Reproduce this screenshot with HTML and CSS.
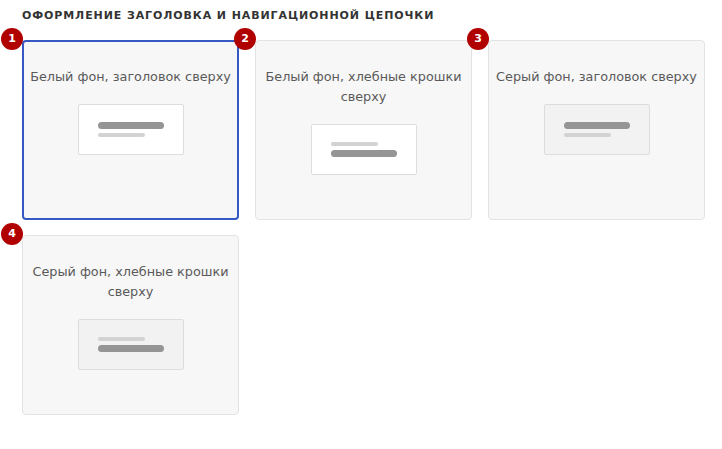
FILE: index.html
```html
<!DOCTYPE html>
<html lang="ru">
<head>
    <meta charset="UTF-8">
    <meta name="viewport" content="width=device-width, initial-scale=1.0">
    <title>Оформление заголовка</title>
    <link rel="stylesheet" href="styles.css">
</head>
<body>
    <div class="page">
        <h2 class="section-title">Оформление заголовка и навигационной цепочки</h2>
        <div class="variants">
            <div class="variant selected">
                <span class="badge">1</span>
                <p class="variant-name">Белый фон, заголовок сверху</p>
                <div class="preview">
                    <span class="bar bar-dark"></span>
                    <span class="bar bar-light"></span>
                </div>
            </div>
            <div class="variant">
                <span class="badge">2</span>
                <p class="variant-name">Белый фон, хлебные крошки сверху</p>
                <div class="preview">
                    <span class="bar bar-light"></span>
                    <span class="bar bar-dark"></span>
                </div>
            </div>
            <div class="variant">
                <span class="badge">3</span>
                <p class="variant-name">Серый фон, заголовок сверху</p>
                <div class="preview grey">
                    <span class="bar bar-dark"></span>
                    <span class="bar bar-light"></span>
                </div>
            </div>
            <div class="variant">
                <span class="badge">4</span>
                <p class="variant-name">Серый фон, хлебные крошки сверху</p>
                <div class="preview grey">
                    <span class="bar bar-light"></span>
                    <span class="bar bar-dark"></span>
                </div>
            </div>
        </div>
    </div>
</body>
</html>
```

FILE: styles.css
```css
body {
    margin: 0;
    background-color: #fff;
    font-family: 'DejaVu Sans', sans-serif;
    color: #555;
}

.page {
    width: 683px;
    padding: 9px 0 0 22px;
}

.section-title {
    margin: 0 0 18px 0;
    font-size: 11px;
    line-height: 13px;
    font-weight: 700;
    letter-spacing: 0.9px;
    text-transform: uppercase;
    color: #333;
}

.variants {
    display: grid;
    grid-template-columns: repeat(3, 217px);
    grid-auto-rows: 180px;
    column-gap: 16px;
    row-gap: 15px;
}

.variant {
    position: relative;
    box-sizing: border-box;
    padding: 26px 4px 0 4px;
    background-color: #f7f7f7;
    border: 1px solid #e3e3e3;
    border-radius: 4px;
    display: flex;
    flex-direction: column;
    align-items: center;
}

.variant.selected {
    border: 2px solid #3559c0;
    padding-top: 25px;
}

.badge {
    position: absolute;
    top: -13px;
    left: -22px;
    width: 22px;
    height: 22px;
    border-radius: 50%;
    background-color: #b00000;
    color: #fff;
    font-size: 11px;
    font-weight: 700;
    line-height: 22px;
    text-align: center;
}

.variant.selected .badge {
    top: -14px;
    left: -23px;
}

.variant-name {
    margin: 0;
    font-size: 12.8px;
    line-height: 20px;
    text-align: center;
    color: #5a5a5a;
}

.preview {
    box-sizing: border-box;
    width: 106px;
    height: 51px;
    margin-top: 17px;
    background-color: #fff;
    border: 1px solid #ddd;
    border-radius: 2px;
    display: flex;
    flex-direction: column;
    justify-content: center;
    padding-left: 19px;
    gap: 4px;
}

.preview.grey {
    background-color: #f2f2f2;
}

.bar {
    display: block;
    border-radius: 4px;
}

.bar-dark {
    width: 66px;
    height: 7px;
    background-color: #959595;
}

.bar-light {
    width: 47px;
    height: 4px;
    background-color: #d3d3d3;
}
```
